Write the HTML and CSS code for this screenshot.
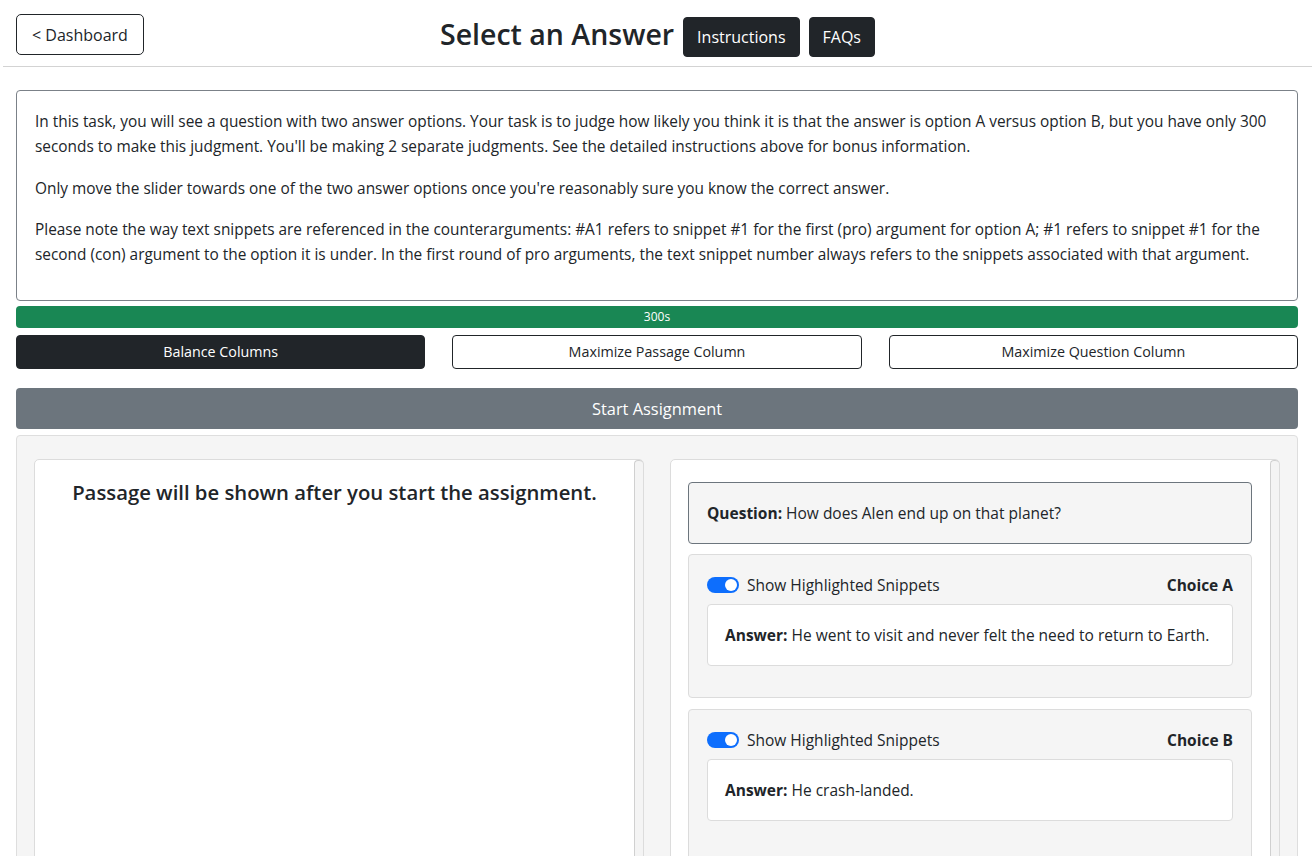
FILE: index.html
```html
<!DOCTYPE html>
<html lang="en">
<head>
<meta charset="utf-8">
<title>Select an Answer</title>
<link rel="stylesheet" href="styles.css">
</head>
<body>
<header class="topbar">
  <div class="topbar-left">
    <button class="btn btn-outline btn-dash">&lt; Dashboard</button>
  </div>
  <div class="topbar-center">
    <h1 class="page-title">Select an Answer</h1>
    <button class="btn btn-dark btn-head">Instructions</button>
    <button class="btn btn-dark btn-head">FAQs</button>
  </div>
  <div class="topbar-right"></div>
</header>

<main class="page">
  <section class="intro">
    <p>In this task, you will see a question with two answer options. Your task is to judge how likely you think it is that the answer is option A versus option B, but you have only 300 seconds to make this judgment. You'll be making 2 separate judgments. See the detailed instructions above for bonus information.</p>
    <p>Only move the slider towards one of the two answer options once you're reasonably sure you know the correct answer.</p>
    <p>Please note the way text snippets are referenced in the counterarguments: #A1 refers to snippet #1 for the first (pro) argument for option A; #1 refers to snippet #1 for the second (con) argument to the option it is under. In the first round of pro arguments, the text snippet number always refers to the snippets associated with that argument.</p>
  </section>

  <div class="progress"><div class="progress-bar" style="width:100%">300s</div></div>

  <div class="layout-buttons">
    <button class="btn btn-dark btn-layout">Balance Columns</button>
    <button class="btn btn-outline btn-layout">Maximize Passage Column</button>
    <button class="btn btn-outline btn-layout">Maximize Question Column</button>
  </div>

  <button class="btn btn-start">Start Assignment</button>

  <section class="workspace">
    <div class="column">
      <div class="column-body">
        <h2 class="passage-title">Passage will be shown after you start the assignment.</h2>
      </div>
      <div class="scroll-strip"></div>
    </div>
    <div class="column">
      <div class="column-body column-body-q">
        <div class="question-box"><strong>Question:</strong> How does Alen end up on that planet?</div>

        <div class="choice">
          <div class="choice-head">
            <label class="switch-row"><span class="switch"><span class="knob"></span></span>Show Highlighted Snippets</label>
            <strong class="choice-label">Choice A</strong>
          </div>
          <div class="answer-box"><strong>Answer:</strong> He went to visit and never felt the need to return to Earth.</div>
        </div>

        <div class="choice choice-last">
          <div class="choice-head">
            <label class="switch-row"><span class="switch"><span class="knob"></span></span>Show Highlighted Snippets</label>
            <strong class="choice-label">Choice B</strong>
          </div>
          <div class="answer-box"><strong>Answer:</strong> He crash-landed.</div>
        </div>
      </div>
      <div class="scroll-strip"></div>
    </div>
  </section>
</main>
</body>
</html>
```

FILE: styles.css
```css
html {
  overflow: hidden;
}
* {
  box-sizing: border-box;
}
body {
  margin: 0;
  font-family: "Open Sans", "Noto Sans", sans-serif;
  font-size: 15.5px;
  line-height: 24px;
  color: #212529;
  background: #fff;
  height: 856px;
  overflow: hidden;
}

.btn {
  font-family: inherit;
  font-size: 15.5px;
  line-height: 22px;
  border-radius: 4px;
  border: 1px solid #212529;
  cursor: pointer;
  color: #212529;
  background: #fff;
}
.btn-dark {
  background: #212529;
  color: #fff;
}

/* header */
.topbar {
  display: grid;
  grid-template-columns: 1fr auto 1fr;
  align-items: start;
  height: 67px;
  margin: 0 4px 0 3px;
  padding: 14px 13px 0 13px;
  border-bottom: 1px solid #d3d3d3;
}
.btn-dash {
  height: 41px;
  padding: 0 15px;
  font-size: 16px;
  border-radius: 5px;
}
.topbar-center {
  display: flex;
  align-items: center;
  gap: 9px;
  margin-top: 2px;
}
.page-title {
  margin: 0 0 5px;
  font-size: 28.5px;
  font-weight: 600;
  line-height: 36px;
}
.btn-head {
  height: 40px;
  padding: 0 13px;
  font-size: 16px;
}

/* main */
.page {
  padding: 23px 18px 0 16px;
}
.intro {
  border: 1px solid #7b8188;
  border-radius: 4px;
  padding: 18px;
  height: 211px;
  font-size: 15.4px;
  line-height: 25px;
}
.intro p {
  margin: 0 0 16.5px;
}

.progress {
  margin-top: 5px;
  height: 22px;
  border-radius: 4px;
  background: #e9ecef;
  overflow: hidden;
}
.progress-bar {
  height: 100%;
  background: #198754;
  color: #fff;
  font-size: 12px;
  line-height: 22px;
  text-align: center;
  font-weight: 500;
}

.layout-buttons {
  margin-top: 7px;
  display: grid;
  grid-template-columns: 1fr 1fr 1fr;
  gap: 27px;
}
.btn-layout {
  height: 34px;
  font-size: 14.3px;
  padding: 0;
}

.btn-start {
  display: block;
  width: 100%;
  margin-top: 19px;
  height: 41px;
  border: none;
  background: #6c757d;
  color: #fff;
  font-size: 16.4px;
}

.workspace {
  margin-top: 6px;
  background: #f5f5f5;
  border: 1px solid #dedede;
  border-radius: 4px;
  padding: 23px 17px 0 17px;
  display: grid;
  grid-template-columns: 1fr 1fr;
  gap: 26px;
  height: 600px;
}
.column {
  display: flex;
  background: #fff;
  border: 1px solid #dcdcdc;
  border-radius: 5px;
  height: 560px;
}
.column-body {
  flex: 1;
  padding: 17px;
}
.column-body-q {
  padding: 22px 18px 0 17px;
}
.scroll-strip {
  width: 9px;
  border: 1px solid #d0d0d0;
  border-right: none;
  border-bottom: none;
  border-radius: 4px 4px 0 0;
  background: #f4f4f4;
}
.passage-title {
  margin: 0;
  text-align: center;
  font-size: 20.3px;
  font-weight: 600;
  line-height: 30px;
}

.question-box {
  border: 1px solid #6c757d;
  border-radius: 4px;
  background: #f5f5f5;
  padding: 18px;
}
.choice {
  margin-top: 10px;
  background: #f5f5f5;
  border: 1px solid #dcdcdc;
  border-radius: 4px;
  padding: 18px 18px 31px 18px;
}
.choice + .choice {
  margin-top: 11px;
}
.choice-last {
  padding-bottom: 60px;
}
.choice-head {
  display: flex;
  justify-content: space-between;
  align-items: center;
}
.switch-row {
  display: flex;
  align-items: center;
  gap: 8px;
}
.switch {
  width: 32px;
  height: 16px;
  border-radius: 8px;
  background: #0d6efd;
  display: flex;
  align-items: center;
  justify-content: flex-end;
  padding-right: 2px;
}
.knob {
  width: 12px;
  height: 12px;
  border-radius: 50%;
  background: #fff;
}
.choice-label {
  font-weight: 700;
}
.answer-box {
  margin-top: 7px;
  background: #fff;
  border: 1px solid #dcdcdc;
  border-radius: 4px;
  padding: 18px 17px;
}
```
